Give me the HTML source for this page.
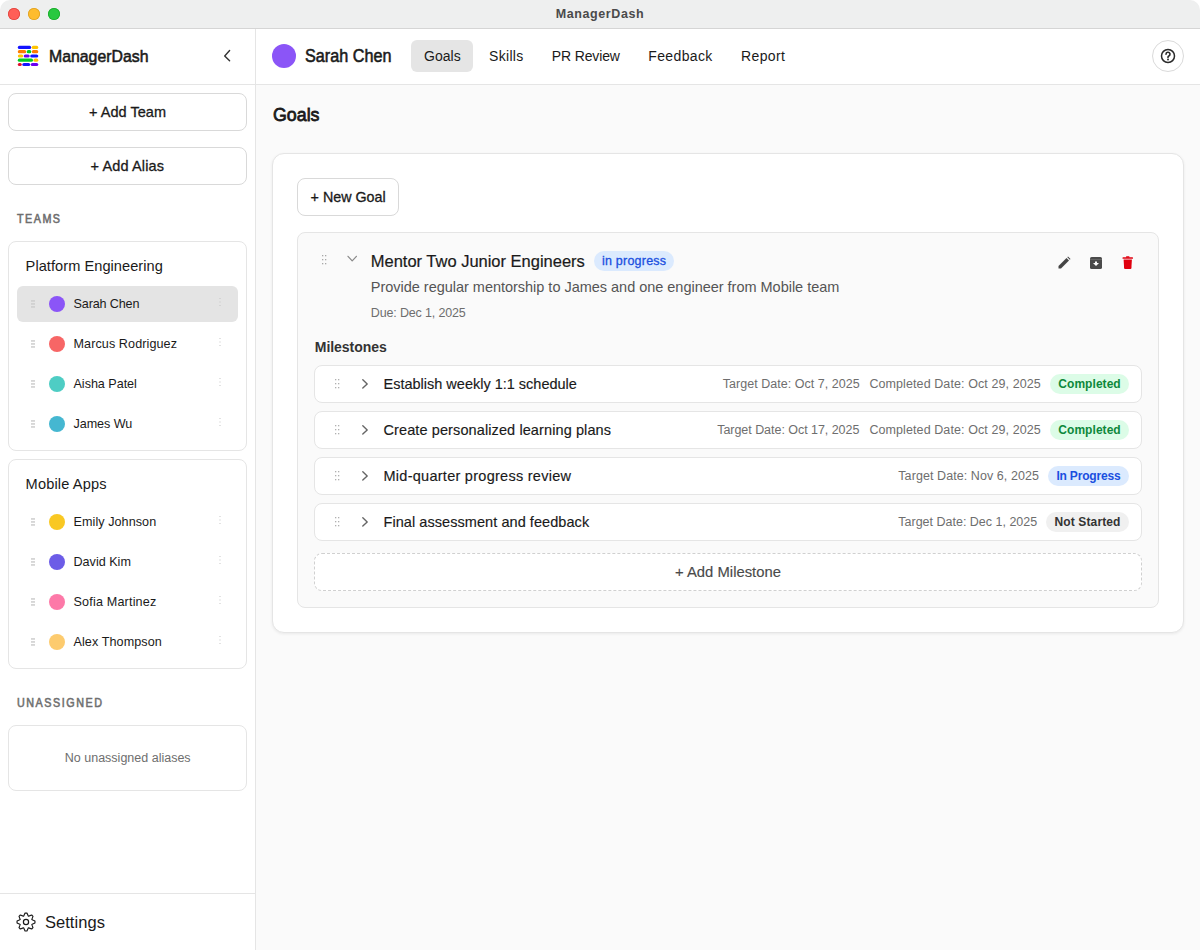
<!DOCTYPE html>
<html><head><meta charset="utf-8">
<style>
*{box-sizing:border-box;margin:0;padding:0}
html,body{width:1200px;height:950px;overflow:hidden;background:#fff}
body{font-family:"Liberation Sans",sans-serif;color:#1a1a1a;position:relative}
.abs{position:absolute}
.t{position:absolute;white-space:nowrap}
</style></head><body>
<div class="abs" style="left:0px;top:0px;width:1200px;height:950px;background:#fff"></div>
<div class="abs" style="left:0px;top:0px;width:1200px;height:29px;background:#eeefef;border-radius:10px 10px 0 0;border-bottom:1px solid #d5d5d5"></div>
<div class="abs" style="left:8px;top:8px;width:12px;height:12px;border-radius:50%;background:#ff5f57;box-shadow:inset 0 0 0 0.8px #e0443e"></div>
<div class="abs" style="left:28px;top:8px;width:12px;height:12px;border-radius:50%;background:#febc2e;box-shadow:inset 0 0 0 0.8px #dea123"></div>
<div class="abs" style="left:48px;top:8px;width:12px;height:12px;border-radius:50%;background:#28c840;box-shadow:inset 0 0 0 0.8px #1aab29"></div>
<div class="t" style="left:555.70px;top:6px;line-height:16px;font-size:12.5px;font-weight:bold;color:#4a4a4a;letter-spacing:0.603px;">ManagerDash</div>
<div class="abs" style="left:255px;top:29px;width:1px;height:921px;background:#e5e5e5"></div>
<div class="abs" style="left:0px;top:84px;width:255px;height:1px;background:#e5e5e5"></div>
<svg class="abs" style="left:17px;top:44px" width="24" height="24" viewBox="0 0 24 24"><rect x="0.80" y="1.80" width="13.40" height="3.2" rx="1.6" fill="#1414ff"/><rect x="14.70" y="1.80" width="6.60" height="3.2" rx="1.6" fill="#ffc400"/><rect x="0.80" y="6.10" width="8.40" height="3.2" rx="1.6" fill="#ff7b00"/><rect x="9.70" y="6.10" width="4.60" height="3.2" rx="1.6" fill="#00cc22"/><rect x="14.80" y="6.10" width="6.50" height="3.2" rx="1.6" fill="#ff7b00"/><rect x="0.80" y="10.40" width="5.40" height="3.2" rx="1.6" fill="#ffc400"/><rect x="6.70" y="10.40" width="6.00" height="3.2" rx="1.6" fill="#6a00f0"/><rect x="13.20" y="10.40" width="8.10" height="3.2" rx="1.6" fill="#1414ff"/><rect x="0.80" y="14.60" width="15.20" height="3.2" rx="1.6" fill="#00cc22"/><rect x="16.50" y="14.60" width="4.80" height="3.2" rx="1.6" fill="#ffc400"/><rect x="0.80" y="18.90" width="4.00" height="3.2" rx="1.6" fill="#e0102f"/><rect x="5.30" y="18.90" width="7.90" height="3.2" rx="1.6" fill="#1414ff"/><rect x="13.70" y="18.90" width="7.60" height="3.2" rx="1.6" fill="#6a00f0"/></svg>
<div class="t" style="left:49.00px;top:46px;line-height:22px;font-size:17px;color:#1a1a1a;letter-spacing:0.000px;transform:scaleX(0.9318);transform-origin:0.00px 0;-webkit-text-stroke:0.55px #1a1a1a">ManagerDash</div>
<svg class="abs" style="left:221px;top:49px" width="12" height="14" viewBox="0 0 12 14"><path d="M8.6 1.6 L3.7 6.9 L8.6 11.8" fill="none" stroke="#333" stroke-width="1.4" stroke-linecap="round" stroke-linejoin="round"/></svg>
<div class="abs" style="left:8px;top:93px;width:239px;height:38px;border:1px solid #d9d9d9;border-radius:8px;background:#fff"></div>
<div class="t" style="left:89.00px;top:103px;line-height:19px;font-size:14.5px;color:#1a1a1a;letter-spacing:0.031px;-webkit-text-stroke:0.3px #1a1a1a">+ Add Team</div>
<div class="abs" style="left:8px;top:147px;width:239px;height:38px;border:1px solid #d9d9d9;border-radius:8px;background:#fff"></div>
<div class="t" style="left:90.40px;top:157px;line-height:19px;font-size:14.5px;color:#1a1a1a;letter-spacing:0.155px;-webkit-text-stroke:0.3px #1a1a1a">+ Add Alias</div>
<div class="t" style="left:17.30px;top:211px;line-height:16px;font-size:12.5px;color:#6e6e6e;letter-spacing:1.734px;transform:scaleX(0.8600);transform-origin:0.00px 0;-webkit-text-stroke:0.6px #6e6e6e">TEAMS</div>
<div class="abs" style="left:8px;top:241px;width:239px;height:210px;border:1px solid #e5e5e5;border-radius:8px;background:#fff"></div>
<div class="t" style="left:25.60px;top:257px;line-height:19px;font-size:14.6px;color:#1a1a1a;letter-spacing:0.051px;">Platform Engineering</div>
<div class="abs" style="left:17px;top:286px;width:221px;height:36px;background:#e4e4e4;border-radius:6px"></div>
<svg class="abs" style="left:30px;top:299px" width="6" height="10" viewBox="0 0 6 10"><g fill="#cdcdcd"><rect x="1" y="1.2" width="4" height="1.5"/><rect x="1" y="4.2" width="4" height="1.5"/><rect x="1" y="7.2" width="4" height="1.5"/></g></svg>
<div class="abs" style="left:49px;top:296px;width:16px;height:16px;border-radius:50%;background:#8b55f7"></div>
<div class="t" style="left:73.50px;top:296px;line-height:16px;font-size:12.6px;color:#1a1a1a;letter-spacing:-0.138px;">Sarah Chen</div>
<svg class="abs" style="left:218px;top:297px" width="4" height="10" viewBox="0 0 4 10"><g fill="#c4c4c4"><rect x="1.5" y="1" width="1" height="1"/><rect x="1.5" y="4.5" width="1" height="1"/><rect x="1.5" y="8" width="1" height="1"/></g></svg>
<svg class="abs" style="left:30px;top:339px" width="6" height="10" viewBox="0 0 6 10"><g fill="#cdcdcd"><rect x="1" y="1.2" width="4" height="1.5"/><rect x="1" y="4.2" width="4" height="1.5"/><rect x="1" y="7.2" width="4" height="1.5"/></g></svg>
<div class="abs" style="left:49px;top:336px;width:16px;height:16px;border-radius:50%;background:#f76666"></div>
<div class="t" style="left:73.50px;top:336px;line-height:16px;font-size:12.6px;color:#1a1a1a;letter-spacing:0.084px;">Marcus Rodriguez</div>
<svg class="abs" style="left:218px;top:337px" width="4" height="10" viewBox="0 0 4 10"><g fill="#c4c4c4"><rect x="1.5" y="1" width="1" height="1"/><rect x="1.5" y="4.5" width="1" height="1"/><rect x="1.5" y="8" width="1" height="1"/></g></svg>
<svg class="abs" style="left:30px;top:379px" width="6" height="10" viewBox="0 0 6 10"><g fill="#cdcdcd"><rect x="1" y="1.2" width="4" height="1.5"/><rect x="1" y="4.2" width="4" height="1.5"/><rect x="1" y="7.2" width="4" height="1.5"/></g></svg>
<div class="abs" style="left:49px;top:376px;width:16px;height:16px;border-radius:50%;background:#4ecdc4"></div>
<div class="t" style="left:73.50px;top:376px;line-height:16px;font-size:12.6px;color:#1a1a1a;letter-spacing:-0.034px;">Aisha Patel</div>
<svg class="abs" style="left:218px;top:377px" width="4" height="10" viewBox="0 0 4 10"><g fill="#c4c4c4"><rect x="1.5" y="1" width="1" height="1"/><rect x="1.5" y="4.5" width="1" height="1"/><rect x="1.5" y="8" width="1" height="1"/></g></svg>
<svg class="abs" style="left:30px;top:419px" width="6" height="10" viewBox="0 0 6 10"><g fill="#cdcdcd"><rect x="1" y="1.2" width="4" height="1.5"/><rect x="1" y="4.2" width="4" height="1.5"/><rect x="1" y="7.2" width="4" height="1.5"/></g></svg>
<div class="abs" style="left:49px;top:416px;width:16px;height:16px;border-radius:50%;background:#45b7d1"></div>
<div class="t" style="left:73.50px;top:416px;line-height:16px;font-size:12.6px;color:#1a1a1a;letter-spacing:-0.069px;">James Wu</div>
<svg class="abs" style="left:218px;top:417px" width="4" height="10" viewBox="0 0 4 10"><g fill="#c4c4c4"><rect x="1.5" y="1" width="1" height="1"/><rect x="1.5" y="4.5" width="1" height="1"/><rect x="1.5" y="8" width="1" height="1"/></g></svg>
<div class="abs" style="left:8px;top:459px;width:239px;height:210px;border:1px solid #e5e5e5;border-radius:8px;background:#fff"></div>
<div class="t" style="left:25.60px;top:475px;line-height:19px;font-size:14.6px;color:#1a1a1a;letter-spacing:0.146px;">Mobile Apps</div>
<svg class="abs" style="left:30px;top:517px" width="6" height="10" viewBox="0 0 6 10"><g fill="#cdcdcd"><rect x="1" y="1.2" width="4" height="1.5"/><rect x="1" y="4.2" width="4" height="1.5"/><rect x="1" y="7.2" width="4" height="1.5"/></g></svg>
<div class="abs" style="left:49px;top:514px;width:16px;height:16px;border-radius:50%;background:#f9c823"></div>
<div class="t" style="left:73.50px;top:514px;line-height:16px;font-size:12.6px;color:#1a1a1a;letter-spacing:0.064px;">Emily Johnson</div>
<svg class="abs" style="left:218px;top:515px" width="4" height="10" viewBox="0 0 4 10"><g fill="#c4c4c4"><rect x="1.5" y="1" width="1" height="1"/><rect x="1.5" y="4.5" width="1" height="1"/><rect x="1.5" y="8" width="1" height="1"/></g></svg>
<svg class="abs" style="left:30px;top:557px" width="6" height="10" viewBox="0 0 6 10"><g fill="#cdcdcd"><rect x="1" y="1.2" width="4" height="1.5"/><rect x="1" y="4.2" width="4" height="1.5"/><rect x="1" y="7.2" width="4" height="1.5"/></g></svg>
<div class="abs" style="left:49px;top:554px;width:16px;height:16px;border-radius:50%;background:#6c5ce7"></div>
<div class="t" style="left:73.50px;top:554px;line-height:16px;font-size:12.6px;color:#1a1a1a;letter-spacing:-0.002px;">David Kim</div>
<svg class="abs" style="left:218px;top:555px" width="4" height="10" viewBox="0 0 4 10"><g fill="#c4c4c4"><rect x="1.5" y="1" width="1" height="1"/><rect x="1.5" y="4.5" width="1" height="1"/><rect x="1.5" y="8" width="1" height="1"/></g></svg>
<svg class="abs" style="left:30px;top:597px" width="6" height="10" viewBox="0 0 6 10"><g fill="#cdcdcd"><rect x="1" y="1.2" width="4" height="1.5"/><rect x="1" y="4.2" width="4" height="1.5"/><rect x="1" y="7.2" width="4" height="1.5"/></g></svg>
<div class="abs" style="left:49px;top:594px;width:16px;height:16px;border-radius:50%;background:#fd79a8"></div>
<div class="t" style="left:73.50px;top:594px;line-height:16px;font-size:12.6px;color:#1a1a1a;letter-spacing:0.174px;">Sofia Martinez</div>
<svg class="abs" style="left:218px;top:595px" width="4" height="10" viewBox="0 0 4 10"><g fill="#c4c4c4"><rect x="1.5" y="1" width="1" height="1"/><rect x="1.5" y="4.5" width="1" height="1"/><rect x="1.5" y="8" width="1" height="1"/></g></svg>
<svg class="abs" style="left:30px;top:637px" width="6" height="10" viewBox="0 0 6 10"><g fill="#cdcdcd"><rect x="1" y="1.2" width="4" height="1.5"/><rect x="1" y="4.2" width="4" height="1.5"/><rect x="1" y="7.2" width="4" height="1.5"/></g></svg>
<div class="abs" style="left:49px;top:634px;width:16px;height:16px;border-radius:50%;background:#fdcb6e"></div>
<div class="t" style="left:73.50px;top:634px;line-height:16px;font-size:12.6px;color:#1a1a1a;letter-spacing:0.082px;">Alex Thompson</div>
<svg class="abs" style="left:218px;top:635px" width="4" height="10" viewBox="0 0 4 10"><g fill="#c4c4c4"><rect x="1.5" y="1" width="1" height="1"/><rect x="1.5" y="4.5" width="1" height="1"/><rect x="1.5" y="8" width="1" height="1"/></g></svg>
<div class="t" style="left:16.80px;top:695px;line-height:16px;font-size:12.5px;color:#707070;letter-spacing:1.799px;transform:scaleX(0.8600);transform-origin:0.00px 0;-webkit-text-stroke:0.6px #707070">UNASSIGNED</div>
<div class="abs" style="left:8px;top:725px;width:239px;height:66px;border:1px solid #e5e5e5;border-radius:8px;background:#fff"></div>
<div class="t" style="left:64.80px;top:750px;line-height:16px;font-size:12.5px;color:#6e6e6e;letter-spacing:0.001px;">No unassigned aliases</div>
<div class="abs" style="left:0px;top:893px;width:255px;height:1px;background:#e5e5e5"></div>
<svg class="abs" style="left:13px;top:909px" width="26" height="26" viewBox="0 0 26 26"><path d="M12.06 4.05 L13.94 4.05 L14.93 6.27 L15.41 7.18 L16.39 6.88 L18.66 6.01 L19.99 7.34 L19.12 9.61 L18.82 10.59 L19.73 11.07 L21.95 12.06 L21.95 13.94 L19.73 14.93 L18.82 15.41 L19.12 16.39 L19.99 18.66 L18.66 19.99 L16.39 19.12 L15.41 18.82 L14.93 19.73 L13.94 21.95 L12.06 21.95 L11.07 19.73 L10.59 18.82 L9.61 19.12 L7.34 19.99 L6.01 18.66 L6.88 16.39 L7.18 15.41 L6.27 14.93 L4.05 13.94 L4.05 12.06 L6.27 11.07 L7.18 10.59 L6.88 9.61 L6.01 7.34 L7.34 6.01 L9.61 6.88 L10.59 7.18 L11.07 6.27Z" fill="none" stroke="#1a1a1a" stroke-width="1.15" stroke-linejoin="round"/><circle cx="13" cy="13" r="2.6" fill="none" stroke="#1a1a1a" stroke-width="1.2"/></svg>
<div class="t" style="left:44.90px;top:912px;line-height:21px;font-size:16.5px;color:#1a1a1a;letter-spacing:0.069px;">Settings</div>
<div class="abs" style="left:256px;top:29px;width:944px;height:921px;background:#fafafa"></div>
<div class="abs" style="left:256px;top:29px;width:944px;height:56px;background:#fff;border-bottom:1px solid #e5e5e5"></div>
<div class="abs" style="left:272px;top:44px;width:24px;height:24px;border-radius:50%;background:#8b55f7"></div>
<div class="t" style="left:304.80px;top:45px;line-height:23px;font-size:17.5px;color:#1a1a1a;letter-spacing:0.000px;transform:scaleX(0.9251);transform-origin:0.00px 0;-webkit-text-stroke:0.55px #1a1a1a">Sarah Chen</div>
<div class="abs" style="left:411px;top:40px;width:62px;height:32px;background:#e5e5e5;border-radius:6px"></div>
<div class="t" style="left:424.00px;top:47px;line-height:18px;font-size:14px;color:#1a1a1a;letter-spacing:0.033px;">Goals</div>
<div class="t" style="left:489.00px;top:47px;line-height:18px;font-size:14px;color:#1a1a1a;letter-spacing:0.325px;">Skills</div>
<div class="t" style="left:551.70px;top:47px;line-height:18px;font-size:14px;color:#1a1a1a;letter-spacing:-0.123px;">PR Review</div>
<div class="t" style="left:648.30px;top:47px;line-height:18px;font-size:14px;color:#1a1a1a;letter-spacing:0.355px;">Feedback</div>
<div class="t" style="left:741.00px;top:47px;line-height:18px;font-size:14px;color:#1a1a1a;letter-spacing:0.397px;">Report</div>
<div class="abs" style="left:1152px;top:40px;width:32px;height:32px;border-radius:50%;border:1px solid #dadada;background:#fff"></div>
<svg class="abs" style="left:1160px;top:48px" width="16" height="16" viewBox="0 0 16 16"><circle cx="8" cy="8" r="6.5" fill="none" stroke="#2a2a2a" stroke-width="1.5"/><path d="M6 6.2a2 2 0 1 1 2.9 1.8c-.55.3-.9.6-.9 1.2v.3" fill="none" stroke="#2a2a2a" stroke-width="1.6" stroke-linecap="round"/><circle cx="8" cy="11.5" r=".95" fill="#2a2a2a"/></svg>
<div class="t" style="left:272.70px;top:102px;line-height:25px;font-size:19px;color:#1a1a1a;letter-spacing:0.000px;transform:scaleX(0.9370);transform-origin:0.00px 0;-webkit-text-stroke:0.8px #1a1a1a">Goals</div>
<div class="abs" style="left:272px;top:153px;width:912px;height:480px;background:#fff;border:1px solid #e5e5e5;border-radius:12px;box-shadow:0 1px 3px rgba(0,0,0,0.07)"></div>
<div class="abs" style="left:297px;top:178px;width:102px;height:38px;border:1px solid #d9d9d9;border-radius:8px;background:#fff"></div>
<div class="t" style="left:310.60px;top:188px;line-height:19px;font-size:14.3px;color:#1a1a1a;letter-spacing:-0.012px;-webkit-text-stroke:0.3px #1a1a1a">+ New Goal</div>
<div class="abs" style="left:297px;top:232px;width:862px;height:376px;background:#fafafa;border:1px solid #e5e5e5;border-radius:8px"></div>
<svg class="abs" style="left:322px;top:254.5px" width="6" height="12" viewBox="0 0 6 12"><g fill="#a8a8a8"><rect x="0" y="0" width="1.3" height="1.3"/><rect x="3" y="0" width="1.3" height="1.3"/><rect x="0" y="4" width="1.3" height="1.3"/><rect x="3" y="4" width="1.3" height="1.3"/><rect x="0" y="8" width="1.3" height="1.3"/><rect x="3" y="8" width="1.3" height="1.3"/></g></svg>
<svg class="abs" style="left:346px;top:253px" width="12" height="10" viewBox="0 0 12 10"><path d="M2 3.3 L6.2 7.9 L10.4 3.3" fill="none" stroke="#8a8a8a" stroke-width="1.25" stroke-linecap="round" stroke-linejoin="round"/></svg>
<div class="t" style="left:370.80px;top:251px;line-height:21px;font-size:16.5px;color:#1a1a1a;letter-spacing:-0.012px;-webkit-text-stroke:0.2px #1a1a1a">Mentor Two Junior Engineers</div>
<div class="abs" style="left:594px;top:251px;width:80px;height:20px;background:#dbeafe;border-radius:10px"></div>
<div class="t" style="left:601.95px;top:253px;line-height:16px;font-size:12.5px;color:#1a4fe0;letter-spacing:0.226px;-webkit-text-stroke:0.3px #1a4fe0">in progress</div>
<div class="t" style="left:370.80px;top:278px;line-height:19px;font-size:14.5px;color:#555555;letter-spacing:-0.020px;">Provide regular mentorship to James and one engineer from Mobile team</div>
<div class="t" style="left:370.80px;top:305px;line-height:16px;font-size:12.5px;color:#6e6e6e;letter-spacing:-0.152px;">Due: Dec 1, 2025</div>
<svg class="abs" style="left:1057px;top:256px" width="14" height="14" viewBox="0 0 14 14"><path d="M1.5 12.5 L1.5 10 L9.5 2 L12 4.5 L4 12.5 Z" fill="#444"/><path d="M10.3 1.2 L11 0.5 L13.5 3 L12.8 3.7 Z" fill="#444"/></svg>
<svg class="abs" style="left:1089px;top:256px" width="14" height="14" viewBox="0 0 14 14"><rect x="1" y="1" width="12" height="12" rx="1.6" fill="#4a4a4a"/><rect x="1" y="3" width="12" height="0.8" fill="#6a6a6a"/><path d="M4 7 L10 7 L7 10 Z" fill="#fff"/><rect x="6" y="5.5" width="2" height="2" fill="#fff"/></svg>
<svg class="abs" style="left:1121px;top:256px" width="14" height="14" viewBox="0 0 14 14"><rect x="1.5" y="1.2" width="10.5" height="1.6" rx="0.6" fill="#e0000f"/><rect x="5" y="0.3" width="3.5" height="1.5" rx="0.6" fill="#e0000f"/><path d="M2.6 3.4 H10.9 L10.4 12.2 Q10.3 13 9.5 13 H4 Q3.2 13 3.1 12.2 Z" fill="#e0000f"/></svg>
<div class="t" style="left:314.80px;top:338px;line-height:18px;font-size:14px;font-weight:bold;color:#333333;letter-spacing:-0.039px;">Milestones</div>
<div class="abs" style="left:314px;top:365px;width:828px;height:38px;background:#fff;border:1px solid #e5e5e5;border-radius:8px"></div>
<svg class="abs" style="left:335px;top:379px" width="6" height="12" viewBox="0 0 6 12"><g fill="#b0b0b0"><rect x="0" y="0" width="1.3" height="1.3"/><rect x="3" y="0" width="1.3" height="1.3"/><rect x="0" y="4" width="1.3" height="1.3"/><rect x="3" y="4" width="1.3" height="1.3"/><rect x="0" y="8" width="1.3" height="1.3"/><rect x="3" y="8" width="1.3" height="1.3"/></g></svg>
<svg class="abs" style="left:360px;top:378px" width="10" height="12" viewBox="0 0 10 12"><path d="M2.8 1.8 L7.2 5.95 L2.8 10.1" fill="none" stroke="#666" stroke-width="1.4" stroke-linecap="round" stroke-linejoin="round"/></svg>
<div class="t" style="left:383.50px;top:375px;line-height:19px;font-size:14.5px;color:#1a1a1a;letter-spacing:-0.002px;-webkit-text-stroke:0.15px #1a1a1a">Establish weekly 1:1 schedule</div>
<div class="t" style="left:722.70px;top:376px;line-height:16px;font-size:12.5px;color:#6e6e6e;letter-spacing:0.035px;">Target Date: Oct 7, 2025</div>
<div class="t" style="left:869.40px;top:376px;line-height:16px;font-size:12.5px;color:#6e6e6e;letter-spacing:0.094px;">Completed Date: Oct 29, 2025</div>
<div class="abs" style="left:1050px;top:374px;width:79px;height:20px;background:#dcfce7;border-radius:10px"></div>
<div class="t" style="left:1058.30px;top:376px;line-height:16px;font-size:12px;font-weight:bold;color:#0e883b;letter-spacing:0.050px;">Completed</div>
<div class="abs" style="left:314px;top:411px;width:828px;height:38px;background:#fff;border:1px solid #e5e5e5;border-radius:8px"></div>
<svg class="abs" style="left:335px;top:425px" width="6" height="12" viewBox="0 0 6 12"><g fill="#b0b0b0"><rect x="0" y="0" width="1.3" height="1.3"/><rect x="3" y="0" width="1.3" height="1.3"/><rect x="0" y="4" width="1.3" height="1.3"/><rect x="3" y="4" width="1.3" height="1.3"/><rect x="0" y="8" width="1.3" height="1.3"/><rect x="3" y="8" width="1.3" height="1.3"/></g></svg>
<svg class="abs" style="left:360px;top:424px" width="10" height="12" viewBox="0 0 10 12"><path d="M2.8 1.8 L7.2 5.95 L2.8 10.1" fill="none" stroke="#666" stroke-width="1.4" stroke-linecap="round" stroke-linejoin="round"/></svg>
<div class="t" style="left:383.50px;top:421px;line-height:19px;font-size:14.5px;color:#1a1a1a;letter-spacing:0.104px;-webkit-text-stroke:0.15px #1a1a1a">Create personalized learning plans</div>
<div class="t" style="left:717.20px;top:422px;line-height:16px;font-size:12.5px;color:#6e6e6e;letter-spacing:-0.039px;">Target Date: Oct 17, 2025</div>
<div class="t" style="left:869.40px;top:422px;line-height:16px;font-size:12.5px;color:#6e6e6e;letter-spacing:0.094px;">Completed Date: Oct 29, 2025</div>
<div class="abs" style="left:1050px;top:420px;width:79px;height:20px;background:#dcfce7;border-radius:10px"></div>
<div class="t" style="left:1058.30px;top:422px;line-height:16px;font-size:12px;font-weight:bold;color:#0e883b;letter-spacing:0.050px;">Completed</div>
<div class="abs" style="left:314px;top:457px;width:828px;height:38px;background:#fff;border:1px solid #e5e5e5;border-radius:8px"></div>
<svg class="abs" style="left:335px;top:471px" width="6" height="12" viewBox="0 0 6 12"><g fill="#b0b0b0"><rect x="0" y="0" width="1.3" height="1.3"/><rect x="3" y="0" width="1.3" height="1.3"/><rect x="0" y="4" width="1.3" height="1.3"/><rect x="3" y="4" width="1.3" height="1.3"/><rect x="0" y="8" width="1.3" height="1.3"/><rect x="3" y="8" width="1.3" height="1.3"/></g></svg>
<svg class="abs" style="left:360px;top:470px" width="10" height="12" viewBox="0 0 10 12"><path d="M2.8 1.8 L7.2 5.95 L2.8 10.1" fill="none" stroke="#666" stroke-width="1.4" stroke-linecap="round" stroke-linejoin="round"/></svg>
<div class="t" style="left:383.50px;top:467px;line-height:19px;font-size:14.5px;color:#1a1a1a;letter-spacing:0.267px;-webkit-text-stroke:0.15px #1a1a1a">Mid-quarter progress review</div>
<div class="t" style="left:898.30px;top:468px;line-height:16px;font-size:12.5px;color:#6e6e6e;letter-spacing:0.075px;">Target Date: Nov 6, 2025</div>
<div class="abs" style="left:1048px;top:466px;width:81px;height:20px;background:#dbeafe;border-radius:10px"></div>
<div class="t" style="left:1056.40px;top:468px;line-height:16px;font-size:12px;font-weight:bold;color:#1a4fe0;letter-spacing:-0.182px;">In Progress</div>
<div class="abs" style="left:314px;top:503px;width:828px;height:38px;background:#fff;border:1px solid #e5e5e5;border-radius:8px"></div>
<svg class="abs" style="left:335px;top:517px" width="6" height="12" viewBox="0 0 6 12"><g fill="#b0b0b0"><rect x="0" y="0" width="1.3" height="1.3"/><rect x="3" y="0" width="1.3" height="1.3"/><rect x="0" y="4" width="1.3" height="1.3"/><rect x="3" y="4" width="1.3" height="1.3"/><rect x="0" y="8" width="1.3" height="1.3"/><rect x="3" y="8" width="1.3" height="1.3"/></g></svg>
<svg class="abs" style="left:360px;top:516px" width="10" height="12" viewBox="0 0 10 12"><path d="M2.8 1.8 L7.2 5.95 L2.8 10.1" fill="none" stroke="#666" stroke-width="1.4" stroke-linecap="round" stroke-linejoin="round"/></svg>
<div class="t" style="left:383.50px;top:513px;line-height:19px;font-size:14.5px;color:#1a1a1a;letter-spacing:0.062px;-webkit-text-stroke:0.15px #1a1a1a">Final assessment and feedback</div>
<div class="t" style="left:898.30px;top:514px;line-height:16px;font-size:12.5px;color:#6e6e6e;letter-spacing:-0.003px;">Target Date: Dec 1, 2025</div>
<div class="abs" style="left:1046px;top:512px;width:83px;height:20px;background:#f0f0f0;border-radius:10px"></div>
<div class="t" style="left:1054.60px;top:514px;line-height:16px;font-size:12px;font-weight:bold;color:#333333;letter-spacing:0.113px;">Not Started</div>
<div class="abs" style="left:314px;top:553px;width:828px;height:38px;background:#fff;border:1px dashed #d0d0d0;border-radius:8px"></div>
<div class="t" style="left:675.00px;top:563px;line-height:19px;font-size:14.8px;color:#4a4a4a;letter-spacing:0.019px;-webkit-text-stroke:0.15px #4a4a4a">+ Add Milestone</div>
</body></html>
